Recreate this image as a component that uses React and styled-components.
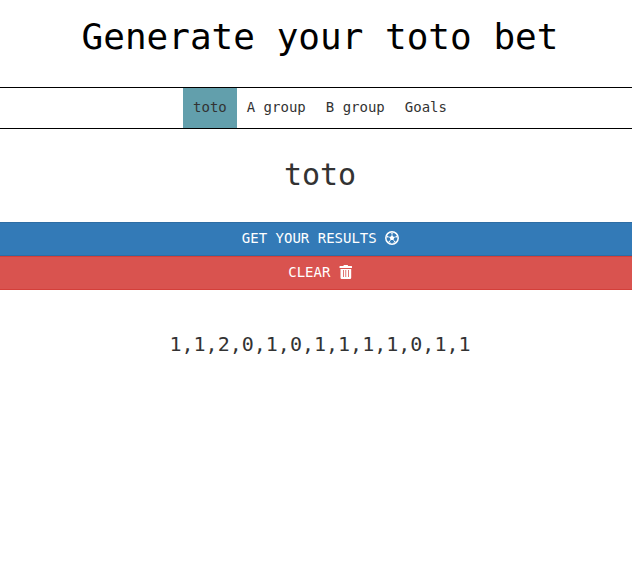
import React from "react";
import styled, { createGlobalStyle } from "styled-components";

const GlobalStyle = createGlobalStyle`
  *, *::before, *::after { box-sizing: border-box; }
  body {
    margin: 0;
    overflow: hidden;
    background: #fff;
    color: #333;
    font: 14px/20px "DejaVu Sans Mono", monospace;
  }
`;

const Page = styled.div`
  width: 100%;
  text-align: center;
`;

const Title = styled.h1`
  margin: 0;
  height: 87px;
  padding: 17px 0 0 8px;
  color: #000;
  font-size: 36px;
  line-height: 40px;
  font-weight: 400;
  white-space: nowrap;
`;

const Tabs = styled.nav`
  display: flex;
  justify-content: center;
  height: 42px;
  padding-left: 8px;
  border-top: 1px solid #000;
  border-bottom: 1px solid #000;
`;

const Tab = styled.a`
  padding: 9px 10px 11px;
  background: ${(p) => (p.$active ? "#629fac" : "transparent")};
  cursor: pointer;
`;

const Heading = styled.h2`
  margin: 0;
  height: 93px;
  padding: 29px 0 0 8px;
  font-size: 30px;
  line-height: 33px;
  font-weight: 400;
`;

const Button = styled.button`
  display: flex;
  justify-content: center;
  align-items: center;
  gap: 8.43px;
  width: 100%;
  height: 34px;
  padding: 0 0 2px 9px;
  border: solid ${(p) => p.$edge};
  border-width: 1px 0;
  background: ${(p) => p.$fill};
  color: #fff;
  font: inherit;
`;

const Icon = styled.svg`
  width: 14px;
  height: 14px;
  flex: none;
`;

const Result = styled.p`
  margin: 0;
  padding: 39px 0 0 8px;
  font-size: 20px;
  line-height: 30px;
`;

const tabs = ["toto", "A group", "B group", "Goals"];

export default function App() {
  return (
    <Page>
      <GlobalStyle />
      <Title>Generate your toto bet</Title>
      <Tabs>
        {tabs.map((name, i) => (
          <Tab key={name} $active={i === 0}>{name}</Tab>
        ))}
      </Tabs>
      <Heading>toto</Heading>
      <Button $fill="#337ab7" $edge="#2e6da4">
        GET YOUR RESULTS
        <Icon viewBox="0 0 14 14" fill="none" stroke="#fff">
          <circle cx="7" cy="7" r="6.2" strokeWidth="1.5" />
          <path d="M7 4.6 9.3 6.2 8.4 9H5.6L4.7 6.2Z" fill="#fff" stroke="none" />
          <path d="M7 5V3M9 6.4 12 5.4M8.2 8.6 9.9 11M5.8 8.6 4.1 11M5 6.4 2 5.4" strokeWidth=".8" />
          <path d="M5.1 1.8 7 3.1 8.9 1.8ZM11.6 4.2 11.1 6 12.5 7.4ZM2.4 4.2 2.9 6 1.5 7.4ZM10.9 10.3 9.2 10.2 8.3 12.2ZM3.1 10.3 4.8 10.2 5.7 12.2Z" fill="#fff" stroke="none" />
        </Icon>
      </Button>
      <Button $fill="#d9534f" $edge="#d43f3a">
        CLEAR
        <Icon viewBox="0 0 14 14">
          <path fill="#fff" fillRule="evenodd" d="M4.5 1V.5Q4.5 0 5 0H8.5Q9 0 9 .5V1H12.5Q13 1 13 1.5V3H.5V1.5Q.5 1 1 1ZM1.5 4H12.2V12.8Q12.2 14 11 14H2.7Q1.5 14 1.5 12.8ZM4 5V12H4.8V5ZM6.4 5V12H7.2V5ZM9 5V12H9.8V5Z" />
        </Icon>
      </Button>
      <Result>1,1,2,0,1,0,1,1,1,1,0,1,1</Result>
    </Page>
  );
}
